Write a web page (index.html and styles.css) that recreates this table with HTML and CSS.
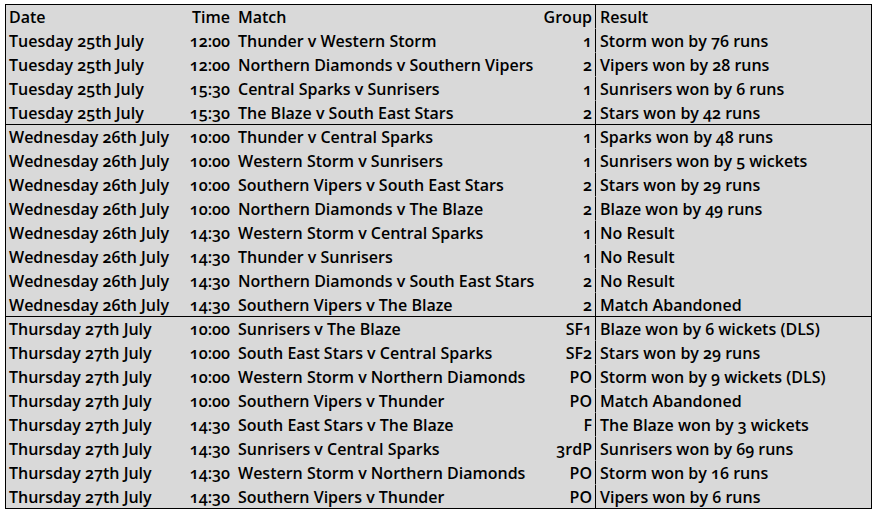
FILE: index.html
```html
<!DOCTYPE html>
<html>
<head>
<meta charset="utf-8">
<link rel="stylesheet" href="styles.css">
</head>
<body>
<div class="sheet">
<table class="fixtures">
<colgroup>
<col class="c-date"><col class="c-time"><col class="c-match"><col class="c-group"><col class="c-result">
</colgroup>
<thead>
<tr class="last"><th class="date">Date</th><th class="time">Time</th><th class="match">Match</th><th class="group">Group</th><th class="result">Result</th></tr>
</thead>
<tbody>
<tr><td>Tuesday 25th July</td><td class="time">12:00</td><td class="match">Thunder v Western Storm</td><td class="group">1</td><td class="result">Storm won by 76 runs</td></tr>
<tr><td>Tuesday 25th July</td><td class="time">12:00</td><td class="match">Northern Diamonds v Southern Vipers</td><td class="group">2</td><td class="result">Vipers won by 28 runs</td></tr>
<tr><td>Tuesday 25th July</td><td class="time">15:30</td><td class="match">Central Sparks v Sunrisers</td><td class="group">1</td><td class="result">Sunrisers won by 6 runs</td></tr>
<tr class="last"><td>Tuesday 25th July</td><td class="time">15:30</td><td class="match">The Blaze v South East Stars</td><td class="group">2</td><td class="result">Stars won by 42 runs</td></tr>
<tr><td>Wednesday 26th July</td><td class="time">10:00</td><td class="match">Thunder v Central Sparks</td><td class="group">1</td><td class="result">Sparks won by 48 runs</td></tr>
<tr><td>Wednesday 26th July</td><td class="time">10:00</td><td class="match">Western Storm v Sunrisers</td><td class="group">1</td><td class="result">Sunrisers won by 5 wickets</td></tr>
<tr><td>Wednesday 26th July</td><td class="time">10:00</td><td class="match">Southern Vipers v South East Stars</td><td class="group">2</td><td class="result">Stars won by 29 runs</td></tr>
<tr><td>Wednesday 26th July</td><td class="time">10:00</td><td class="match">Northern Diamonds v The Blaze</td><td class="group">2</td><td class="result">Blaze won by 49 runs</td></tr>
<tr><td>Wednesday 26th July</td><td class="time">14:30</td><td class="match">Western Storm v Central Sparks</td><td class="group">1</td><td class="result">No Result</td></tr>
<tr><td>Wednesday 26th July</td><td class="time">14:30</td><td class="match">Thunder v Sunrisers</td><td class="group">1</td><td class="result">No Result</td></tr>
<tr><td>Wednesday 26th July</td><td class="time">14:30</td><td class="match">Northern Diamonds v South East Stars</td><td class="group">2</td><td class="result">No Result</td></tr>
<tr class="last"><td>Wednesday 26th July</td><td class="time">14:30</td><td class="match">Southern Vipers v The Blaze</td><td class="group">2</td><td class="result">Match Abandoned</td></tr>
<tr><td>Thursday 27th July</td><td class="time">10:00</td><td class="match">Sunrisers v The Blaze</td><td class="group">SF1</td><td class="result">Blaze won by 6 wickets (DLS)</td></tr>
<tr><td>Thursday 27th July</td><td class="time">10:00</td><td class="match">South East Stars v Central Sparks</td><td class="group">SF2</td><td class="result">Stars won by 29 runs</td></tr>
<tr><td>Thursday 27th July</td><td class="time">10:00</td><td class="match">Western Storm v Northern Diamonds</td><td class="group">PO</td><td class="result">Storm won by 9 wickets (DLS)</td></tr>
<tr><td>Thursday 27th July</td><td class="time">10:00</td><td class="match">Southern Vipers v Thunder</td><td class="group">PO</td><td class="result">Match Abandoned</td></tr>
<tr><td>Thursday 27th July</td><td class="time">14:30</td><td class="match">South East Stars v The Blaze</td><td class="group">F</td><td class="result">The Blaze won by 3 wickets</td></tr>
<tr><td>Thursday 27th July</td><td class="time">14:30</td><td class="match">Sunrisers v Central Sparks</td><td class="group">3rdP</td><td class="result">Sunrisers won by 69 runs</td></tr>
<tr><td>Thursday 27th July</td><td class="time">14:30</td><td class="match">Western Storm v Northern Diamonds</td><td class="group">PO</td><td class="result">Storm won by 16 runs</td></tr>
<tr class="last"><td>Thursday 27th July</td><td class="time">14:30</td><td class="match">Southern Vipers v Thunder</td><td class="group">PO</td><td class="result">Vipers won by 6 runs</td></tr>
</tbody>
</table>
</div>
</body>
</html>
```

FILE: styles.css
```css
html, body {
  margin: 0;
  padding: 0;
  background: #ffffff;
}
.sheet {
  padding: 4px 0 0 5px;
}
.fixtures {
  border-collapse: separate;
  border-spacing: 0;
  table-layout: fixed;
  width: 867px;
  background: #d9d9d9;
  border: 1px solid #000;
  border-bottom: 0;
  font-family: "Open Sans", "Noto Sans", sans-serif;
  font-size: 16px;
  font-feature-settings: "onum" 1;
  font-variant-numeric: oldstyle-nums;
  color: #000;
}
.c-date { width: 170px; }
.c-time { width: 57px; }
.c-match { width: 307px; }
.c-group { width: 55px; }
.c-result { width: 276px; }
.fixtures th, .fixtures td {
  height: 21px;
  padding: 2px 3px 0 3px;
  text-align: left;
  font-weight: 600;
  white-space: nowrap;
  overflow: hidden;
  line-height: 21px;
  box-sizing: content-box;
  border-bottom: 1px solid #d9d9d9;
  vertical-align: middle;
}
.fixtures .time, .fixtures .group {
  text-align: right;
}
.fixtures .match {
  padding-left: 5px;
}
.fixtures .result {
  border-left: 1px solid #000;
  padding-left: 4px;
}
.fixtures tr.last > th, .fixtures tr.last > td {
  border-bottom-color: #000;
}
.fixtures thead tr.last > th {
  border-bottom-color: #d9d9d9;
}
```
